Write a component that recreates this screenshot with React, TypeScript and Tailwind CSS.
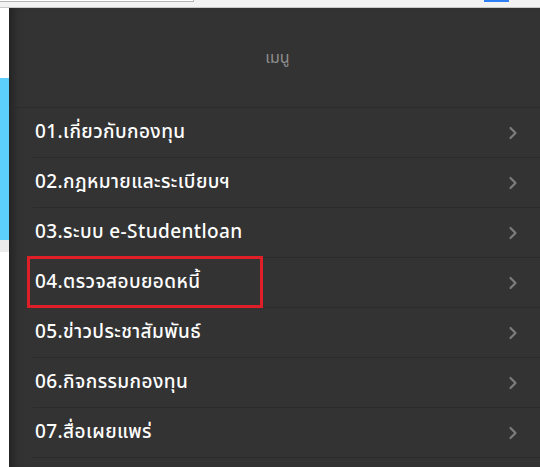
import { ChevronRight } from 'lucide-react'

const items = [
  '01.เกี่ยวกับกองทุน',
  '02.กฎหมายและระเบียบฯ',
  '03.ระบบ e-Studentloan',
  '04.ตรวจสอบยอดหนี้',
  '05.ข่าวประชาสัมพันธ์',
  '06.กิจกรรมกองทุน',
  '07.สื่อเผยแพร่',
]

export default function App() {
  return (
    <div
      className="w-[540px] h-[467px] flex flex-col overflow-hidden bg-white"
      style={{ fontFamily: '"Noto Sans Thai", "Noto Sans", "Liberation Sans", sans-serif' }}
    >
      {/* Top strip of the page behind */}
      <div className="h-[8px] shrink-0 flex bg-[#f2f2f2] border-b border-[#c9c9c9]">
        <div className="w-[194px] h-[2px] border-b border-r border-[#b5b5b5] bg-white" />
        <div className="flex-1" />
        <div className="w-[25px] h-[2px] bg-[#2f7ff6] mr-[31px]" />
      </div>

      <div className="flex flex-1 min-h-0">
        {/* Left edge of the page behind */}
        <div className="w-[9px] shrink-0 flex flex-col">
          <div className="h-[70px] bg-white" />
          <div className="h-[162px] bg-[#5ccffa]" />
          <div className="h-[12px] bg-[#ececec]" />
          <div className="flex-1 bg-white" />
        </div>

        {/* Menu panel */}
        <div className="flex-1 flex flex-col bg-[#333333] shadow-[inset_10px_0_10px_-6px_rgba(0,0,0,0.35)]">
          <div className="h-[100px] shrink-0 flex items-center justify-center pl-[6px] border-b border-[#2b2b2b]">
            <span className="text-[16px] text-[#8e8e8e]">เมนู</span>
          </div>

          <div className="flex flex-col pl-[24px]">
            {items.map((label, i) => (
              <div key={label} className="h-[50px] flex items-center border-b border-[#2b2b2b]">
                <div className="relative flex-1 flex items-center h-full">
                  {i === 3 && (
                    <div className="absolute left-[-6px] top-[-2px] w-[236px] h-[52px] border-[3px] border-[#de1f28]" />
                  )}
                  <span className="pl-[2px] text-[19px] font-medium tracking-[0.4px] text-white leading-none">
                    {label}
                  </span>
                </div>
                <ChevronRight className="w-[20px] h-[20px] text-[#7d7d7d] mr-[17px]" strokeWidth={2.6} />
              </div>
            ))}
          </div>
        </div>
      </div>
    </div>
  )
}
